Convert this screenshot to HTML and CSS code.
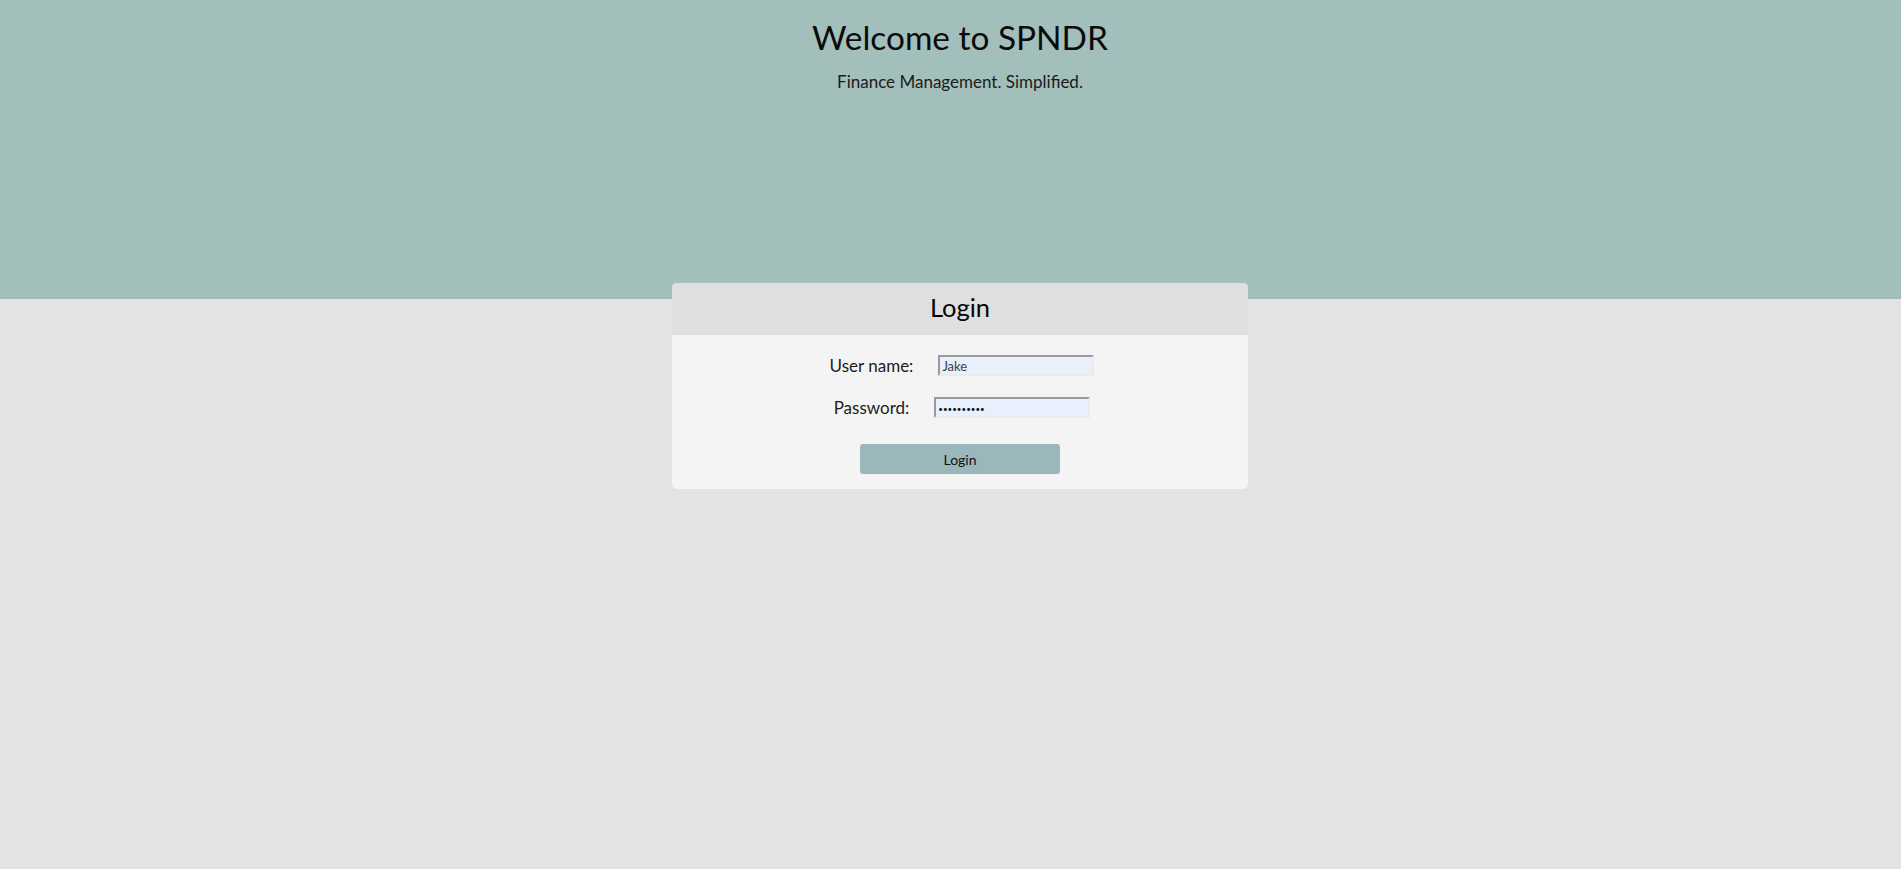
FILE: index.html
```html
<!DOCTYPE html>
<html lang="en">
<head>
<meta charset="utf-8">
<title>SPNDR</title>
<link rel="stylesheet" href="styles.css">
</head>
<body>
<header class="hero">
  <h1 class="hero-title">Welcome to SPNDR</h1>
  <p class="hero-sub">Finance Management. Simplified.</p>
</header>
<main class="page">
  <section class="card">
    <div class="card-head"><h2 class="card-title">Login</h2></div>
    <form class="card-body">
      <div class="row">
        <label class="label" for="user">User name:</label>
        <input class="field" id="user" type="text" value="Jake">
      </div>
      <div class="row">
        <label class="label" for="pass">Password:</label>
        <input class="field field-pass" id="pass" type="password" value="abcdefghij">
      </div>
      <button class="btn" type="button">Login</button>
    </form>
  </section>
</main>
</body>
</html>
```

FILE: styles.css
```css
html, body {
  margin: 0;
  padding: 0;
  background: #e3e3e3;
  font-family: Lato, "Open Sans", sans-serif;
  color: #111;
}
.hero {
  height: 299px;
  background: #a3bfbb;
  box-sizing: border-box;
  padding: 17px 0 0 19px;
  text-align: center;
}
.hero-title {
  margin: 0;
  font-size: 33.4px;
  line-height: 40px;
  font-weight: 400;
  color: #0a0a0a;
}
.hero-sub {
  margin: 15px 0 0;
  font-size: 17px;
  line-height: 20px;
  color: #1a1a1a;
}
.page {
  padding-left: 19px;
  display: flex;
  justify-content: center;
}
.card {
  width: 576px;
  margin-top: -16px;
  border-radius: 5px;
  overflow: hidden;
  background: #f4f4f4;
}
.card-head {
  height: 52px;
  background: #dfdfdf;
  text-align: center;
}
.card-title {
  margin: 0;
  font-size: 25.5px;
  line-height: 48px;
  font-weight: 400;
  color: #050505;
}
.card-body {
  margin: 0;
  padding: 20px 0 15px;
  display: flex;
  flex-direction: column;
  align-items: center;
}
.row {
  display: flex;
  align-items: center;
  justify-content: center;
  gap: 25px;
  height: 21px;
  margin-left: 4px;
}
.row + .row {
  margin-top: 21px;
}
.label {
  font-size: 17px;
  line-height: 20px;
  color: #1c1c1c;
}
.field {
  box-sizing: border-box;
  width: 156px;
  height: 21px;
  margin: 0;
  padding: 0 2px;
  border-style: solid;
  border-width: 2px;
  border-color: #9a9a9a #ebebeb #ebebeb #9a9a9a;
  background: #e8f0fe;
  font-family: Lato, "Open Sans", sans-serif;
  font-size: 13px;
  color: #3a4048;
  outline: none;
}
.field-pass {
  font-size: 8px;
  color: #111;
  padding-top: 2px;
}
.btn {
  margin-top: 26px;
  width: 200px;
  height: 30px;
  border: none;
  border-radius: 3px;
  background: #9ab7bb;
  font-family: Lato, "Open Sans", sans-serif;
  font-size: 14px;
  color: #111;
  cursor: pointer;
}
```
